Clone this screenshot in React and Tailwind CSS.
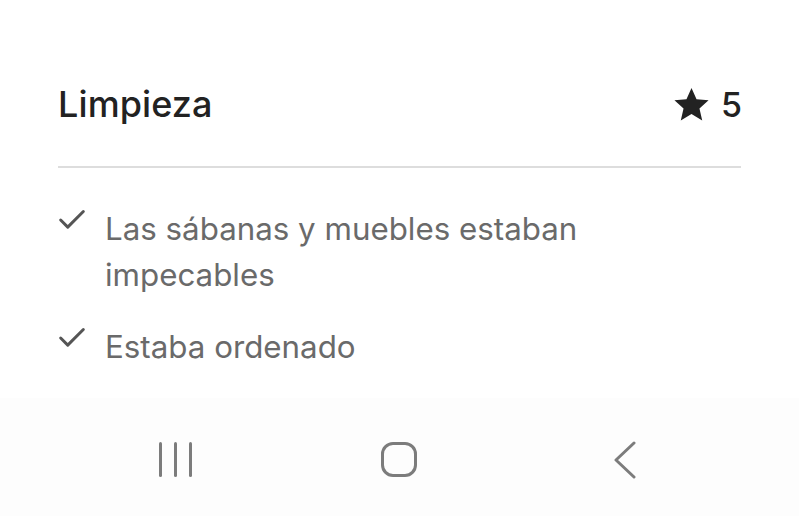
import { Check } from 'lucide-react';

const items = [
  { text: 'Las sábanas y muebles estaban impecables' },
  { text: 'Estaba ordenado' },
];

function Star() {
  return (
    <svg width="41" height="39" viewBox="0 0 24 24" fill="#222222">
      <path d="M12 1.8l3.1 6.9 7.4.7-5.6 5 1.7 7.4L12 17.9l-6.6 3.9 1.7-7.4-5.6-5 7.4-.7z" />
    </svg>
  );
}

export default function App() {
  return (
    <div className="w-[799px] h-[516px] bg-white flex flex-col" style={{ fontFamily: 'Inter, "Noto Sans", sans-serif' }}>
      <div className="px-[58px]">
        <div className="mt-[79px] h-[50px] flex items-center justify-between">
          <h2 className="text-[36px] font-medium text-[#222222] tracking-[0.1px]">Limpieza</h2>
          <div className="flex items-center gap-[9px] -mr-[1px]">
            <Star />
            <span className="text-[34px] font-medium text-[#222222]">5</span>
          </div>
        </div>
        <div className="mt-[37px] h-[2px] bg-[#dddddd]" />
        <ul className="mt-[38px] flex flex-col gap-[26px]">
          {items.map((it) => (
            <li key={it.text} className="flex items-start">
              <div className="w-[47px] h-[46px] flex items-center -mt-[9px]">
                <Check size={34} strokeWidth={2.1} color="#555555" className="-ml-[3px]" />
              </div>
              <p className="w-[520px] text-[31.3px] leading-[46px] text-[#6a6a6a]">{it.text}</p>
            </li>
          ))}
        </ul>
      </div>
      <div className="mt-auto h-[118px] bg-[#fdfdfd] flex items-center pt-[5px]">
        <div className="ml-[159px] flex gap-[12px]">
          <span className="w-[3px] h-[35px] rounded-full bg-[#7c7c7c]" />
          <span className="w-[3px] h-[35px] rounded-full bg-[#7c7c7c]" />
          <span className="w-[3px] h-[35px] rounded-full bg-[#7c7c7c]" />
        </div>
        <div className="ml-[189px] w-[36px] h-[35px] rounded-[12px] border-[3px] border-[#7c7c7c]" />
        <svg className="ml-[196px]" width="24" height="38" viewBox="0 0 24 38" fill="none" stroke="#7c7c7c" strokeWidth="3" strokeLinecap="round" strokeLinejoin="round">
          <path d="M21 2L3 19l18 17" />
        </svg>
      </div>
    </div>
  );
}
